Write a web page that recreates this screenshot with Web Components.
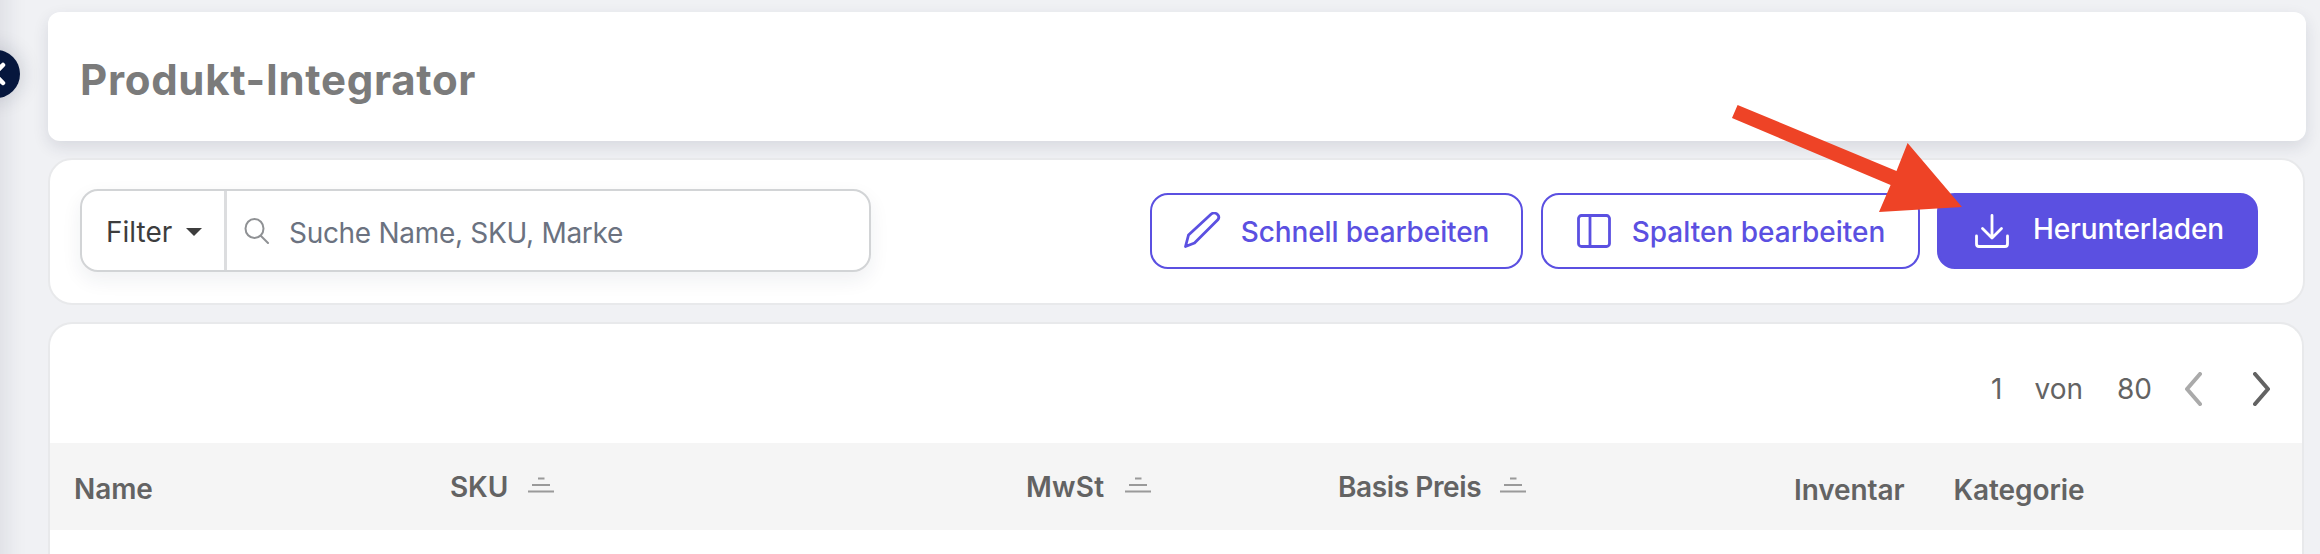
<!DOCTYPE html>
<html lang="de">
<head>
<meta charset="UTF-8">
<title>Produkt-Integrator</title>
<style>
  html, body { margin: 0; height: 100%; overflow: hidden; }
  body { background: #f0f1f4; font-family: "Inter", "Liberation Sans", sans-serif; }
</style>
</head>
<body>
<app-shell>
  <side-toggle slot="side"></side-toggle>
  <title-card>Produkt-Integrator</title-card>
  <tool-bar>
    <filter-search slot="left" placeholder="Suche Name, SKU, Marke"></filter-search>
    <action-button slot="right" icon="pencil" style="width:373px">Schnell bearbeiten</action-button>
    <action-button slot="right" icon="columns" style="width:379px;padding-left:2px;gap:21px;letter-spacing:0">Spalten bearbeiten</action-button>
    <action-button slot="right" icon="download" primary style="width:321px;padding-left:4px;gap:24px">Herunterladen</action-button>
  </tool-bar>
  <table-card>
    <page-nav slot="top"></page-nav>
    <head-cell style="width:400px;padding-left:24px;padding-top:5px">Name</head-cell>
    <head-cell sortable style="width:576px;padding-top:1px;gap:20px">SKU</head-cell>
    <head-cell sortable style="width:312px;padding-top:1px;letter-spacing:.2px">MwSt</head-cell>
    <head-cell sortable style="width:456px;padding-top:1px;gap:19px;letter-spacing:-.4px">Basis Preis</head-cell>
    <head-cell style="width:159.500px;padding-top:7px">Inventar</head-cell>
    <head-cell style="padding-top:7px">Kategorie</head-cell>
  </table-card>
  <red-arrow></red-arrow>
</app-shell>

<script>
  const ICONS = {
    pencil: '<svg width="37" height="37" viewBox="0 0 37 37" fill="none" stroke="currentColor" stroke-width="2.800" stroke-linejoin="round"><path d="M1.500 34.500L4.500 23 27 2.200C29 .5 32 1 33.500 2.500 35 4 35.200 6 33.800 7.800L10.500 31z"/></svg>',
    columns: '<svg width="34" height="34" viewBox="0 0 34 34" fill="none" stroke="currentColor" stroke-width="2.800"><rect x="1.500" y="1.500" width="31" height="31" rx="3"/><path d="M13 1.500v31"/></svg>',
    download: '<svg width="34" height="34" viewBox="0 0 34 34" fill="none" stroke="currentColor" stroke-width="2.800" stroke-linecap="round" stroke-linejoin="round"><path d="M17 1.500v22M7.500 14.500l9.500 9.500 9.500-9.500"/><path d="M1.500 22v8c0 1.500 1 2.500 2.500 2.500h26c1.500 0 2.500-1 2.500-2.500v-8"/></svg>'
  };

  class AppShell extends HTMLElement {
    constructor() {
      super();
      this.attachShadow({ mode: 'open' }).innerHTML = `
        <style>
          :host { display: block; position: relative; height: 554px; overflow: hidden; }
          :host::before { content: ""; position: absolute; left: -12px; top: -40px; width: 12px; height: 640px; box-shadow: 0 0 26px rgba(20,30,60,.18); }
          .main { display: flex; flex-direction: column; padding: 12px 14px 0 48px; position: relative; }
        </style>
        <slot name="side"></slot>
        <div class="main"><slot></slot></div>`;
    }
  }

  class SideToggle extends HTMLElement {
    constructor() {
      super();
      this.attachShadow({ mode: 'open' }).innerHTML = `
        <style>
          :host { position: absolute; left: -28px; top: 50px; width: 48px; height: 48px; border-radius: 50%; background: #06173d; box-shadow: 0 0 22px rgba(20,30,60,.2); overflow: hidden; z-index: 2; }
          svg { position: absolute; left: 0; top: 0; }
        </style>
        <svg width="48" height="48" viewBox="0 0 48 48" fill="none" stroke="#fff" stroke-width="4.500" stroke-linecap="round" stroke-linejoin="round"><path d="M31 15l-9 9 9 9"/></svg>`;
    }
  }

  class TitleCard extends HTMLElement {
    constructor() {
      super();
      this.attachShadow({ mode: 'open' }).innerHTML = `
        <style>
          :host { display: flex; align-items: center; height: 129px; padding: 5px 0 0 32px; box-sizing: border-box; background: #fff; border-radius: 12px; box-shadow: 0 6px 16px rgba(30,40,70,.12); color: #7b7b7b; font-size: 42px; font-weight: 700; letter-spacing: .7px; }
        </style>
        <slot></slot>`;
    }
  }

  class ToolBar extends HTMLElement {
    constructor() {
      super();
      this.attachShadow({ mode: 'open' }).innerHTML = `
        <style>
          :host { display: flex; align-items: center; justify-content: space-between; height: 147px; margin-top: 17px; margin-right: 1px; padding: 0 45px 0 30px; box-sizing: border-box; background: #fff; border: 2px solid #e8e9eb; border-radius: 24px; }
          .right { display: flex; gap: 17.500px; margin-top: -2px; }
        </style>
        <slot name="left"></slot>
        <div class="right"><slot name="right"></slot></div>`;
    }
  }

  class FilterSearch extends HTMLElement {
    constructor() {
      super();
      this.attachShadow({ mode: 'open' }).innerHTML = `
        <style>
          :host { display: flex; width: 791px; height: 83px; margin-top: -2px; box-sizing: border-box; border: 2px solid #d2d4d6; border-radius: 18px; box-shadow: 0 8px 20px rgba(30,40,70,.07); background: #fff; font-size: 28px; }
          .filter { display: flex; align-items: center; gap: 14px; width: 145px; padding: 2px 0 0 24px; box-sizing: border-box; border-right: 3px solid #dcdddf; color: #3d3d3d; }
          .caret { width: 0; height: 0; border-left: 8px solid transparent; border-right: 8px solid transparent; border-top: 8px solid #3d3d3d; }
          .search { display: flex; align-items: center; gap: 19px; padding: 0 0 0 17px; color: #6b7280; letter-spacing: -.3px; }
          .search span { padding-top: 4px; }
          svg { flex: none; }
        </style>
        <div class="filter">Filter<span class="caret"></span></div>
        <div class="search">
          <svg width="26" height="26" viewBox="0 0 26 26" fill="none" stroke="#8f9194" stroke-width="2" stroke-linecap="round"><ellipse cx="10.500" cy="10.500" rx="9" ry="9.500"/><path d="M17 18l7 7"/></svg>
          <span id="ph"></span>
        </div>`;
      this.shadowRoot.getElementById('ph').textContent = this.getAttribute('placeholder');
    }
  }

  class ActionButton extends HTMLElement {
    constructor() {
      super();
      const primary = this.hasAttribute('primary');
      this.attachShadow({ mode: 'open' }).innerHTML = `
        <style>
          :host { display: flex; align-items: center; justify-content: center; gap: 20px; height: 76px; box-sizing: border-box; border: 2px solid #5b50e1; border-radius: 18px; background: ${primary ? '#5b50e1' : '#fff'}; color: ${primary ? '#fff' : '#5b50e1'}; font-size: 28px; font-weight: 500; letter-spacing: -.1px; }
          svg { display: block; flex: none; }
          .label { padding-top: ${primary ? '0' : '3px'}; margin-top: ${primary ? '-3px' : '0'}; }
        </style>
        ${ICONS[this.getAttribute('icon')]}<span class="label"><slot></slot></span>`;
    }
  }

  class TableCard extends HTMLElement {
    constructor() {
      super();
      this.attachShadow({ mode: 'open' }).innerHTML = `
        <style>
          :host { display: block; height: 300px; margin-top: 17px; margin-right: 2px; box-sizing: border-box; background: #fff; border: 2px solid #e8e9eb; border-bottom: 0; border-radius: 24px 24px 0 0; overflow: hidden; }
          .top { height: 119px; }
          .head { display: flex; align-items: center; height: 87px; background: #f5f5f5; }
        </style>
        <div class="top"><slot name="top"></slot></div>
        <div class="head"><slot></slot></div>`;
    }
  }

  class HeadCell extends HTMLElement {
    constructor() {
      super();
      this.attachShadow({ mode: 'open' }).innerHTML = `
        <style>
          :host { display: flex; align-items: center; gap: 21px; box-sizing: border-box; flex: none; color: #636363; font-size: 28px; font-weight: 600; letter-spacing: -.1px; }
          svg { display: block; margin-top: -5px; }
        </style>
        <slot></slot>
        ${this.hasAttribute('sortable') ? '<svg width="26" height="16" viewBox="0 0 26 16" fill="none" stroke="#9a9a9a" stroke-width="2"><path d="M10 1.500h6.500M4 8h18M0 14.500h26"/></svg>' : ''}`;
    }
  }

  class PageNav extends HTMLElement {
    constructor() {
      super();
      this.attachShadow({ mode: 'open' }).innerHTML = `
        <style>
          :host { display: flex; align-items: center; justify-content: flex-end; height: 100%; padding: 11px 32px 0 0; box-sizing: border-box; color: #636363; font-size: 28px; }
          span { display: block; }
          .von { margin: 0 34px 0 32px; }
          svg { display: block; }
          .prev { margin-left: 33px; color: #aaa; }
          .next { margin-left: 51px; color: #636363; }
        </style>
        <span>1</span><span class="von">von</span><span>80</span>
        <svg class="prev" width="17" height="34" viewBox="0 0 17 34" fill="none" stroke="currentColor" stroke-width="4" stroke-linecap="round" stroke-linejoin="round"><path d="M15 2L2 17l13 15"/></svg>
        <svg class="next" width="17" height="34" viewBox="0 0 17 34" fill="none" stroke="currentColor" stroke-width="4" stroke-linecap="round" stroke-linejoin="round"><path d="M2 2l13 15L2 32"/></svg>`;
    }
  }

  // annotation painted on top of the screenshot
  class RedArrow extends HTMLElement {
    constructor() {
      super();
      this.attachShadow({ mode: 'open' }).innerHTML = `
        <style>:host { position: absolute; left: 0; top: 0; width: 2320px; height: 554px; pointer-events: none; z-index: 5; }</style>
        <svg width="2320" height="554" viewBox="0 0 2320 554"><path fill="#ee4326" d="M1737.600 105L1896.500 171 1907.600 143 1962 207 1879 212 1890.600 185 1732 118z"/></svg>`;
    }
  }

  customElements.define('app-shell', AppShell);
  customElements.define('side-toggle', SideToggle);
  customElements.define('title-card', TitleCard);
  customElements.define('tool-bar', ToolBar);
  customElements.define('filter-search', FilterSearch);
  customElements.define('action-button', ActionButton);
  customElements.define('table-card', TableCard);
  customElements.define('head-cell', HeadCell);
  customElements.define('page-nav', PageNav);
  customElements.define('red-arrow', RedArrow);
</script>
</body>
</html>
